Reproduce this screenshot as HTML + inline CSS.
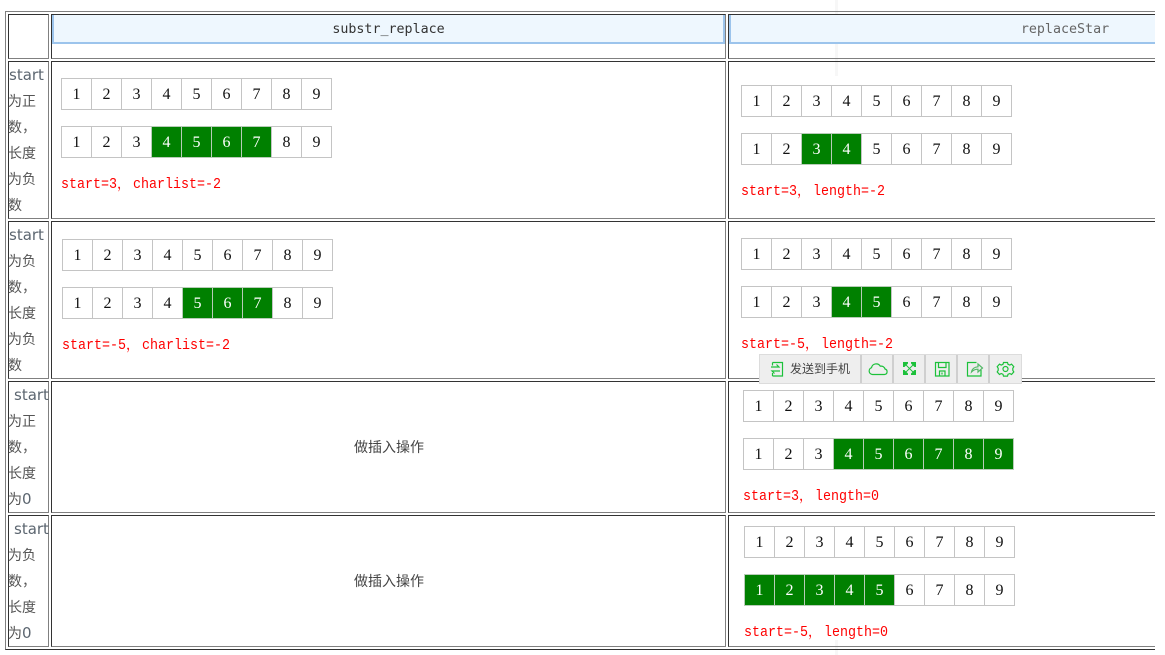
<!DOCTYPE html>
<html><head><meta charset="utf-8"><style>
html,body{margin:0;padding:0;background:#fff;width:1165px;height:655px;overflow:hidden}
body{position:relative}
.a{position:absolute;box-sizing:border-box}
.c{position:absolute;box-sizing:border-box;border:1px solid;border-color:#333 #808080 #808080 #333}
.n{position:absolute;display:flex;height:32px}
.n span{box-sizing:border-box;width:31px;height:32px;margin-right:-1px;border:1px solid #c4c4c4;text-align:center;font:16px/31px "Liberation Serif",serif;color:#111;background:#fff}
.n span.g{background:#008000;color:#fff;border-color:#b8ccb8}
.r{position:absolute;font:15px/20px "Liberation Mono","Noto Serif CJK SC",monospace;color:#f00;white-space:pre;transform:scaleX(.889);transform-origin:0 0}
.r i{display:inline-block;width:18px;font-style:normal}
.l{position:absolute;left:8px;width:41px;font:14px/26px "Liberation Sans","Noto Sans CJK SC",sans-serif;color:#555;white-space:nowrap}
.l b{font:15px/26px "DejaVu Sans",sans-serif;color:#5c6670;margin-left:1px}
.h{position:absolute;top:15px;height:29px;box-sizing:border-box;background:#eef7fe;border:2px solid #9cc4ec;border-top:0;text-align:center;font:13.33px/28px "DejaVu Sans Mono",monospace;color:#333;padding-top:1px}
.t{position:absolute;left:52.500px;width:673px;text-align:center;font:14px/20px "Liberation Sans","Noto Sans CJK SC",sans-serif;color:#444}
.s{position:absolute;top:355px;width:2px;height:28px;background:#cfcfcf}
</style></head><body>
<div class="a" style="left:835px;top:0;width:3px;height:76px;background:#f7f7f7"></div>
<div class="a" style="left:835px;top:640px;width:3px;height:15px;background:#f7f7f7"></div>
<div class="a" style="left:5px;top:11px;width:1160px;height:639px;border:1px solid;border-color:#808080 transparent #333 #808080;border-right:0"></div>
<div class="a" style="left:1155px;top:0;width:10px;height:655px;background:#fff;z-index:5"></div>

<div class="c" style="left:8px;top:14px;width:41px;height:45px"></div>
<div class="c" style="left:51px;top:14px;width:675px;height:45px"></div>
<div class="c" style="left:728px;top:14px;width:440px;height:45px"></div>
<div class="c" style="left:8px;top:61px;width:41px;height:158px"></div>
<div class="c" style="left:51px;top:61px;width:675px;height:158px"></div>
<div class="c" style="left:728px;top:61px;width:440px;height:158px"></div>
<div class="c" style="left:8px;top:221px;width:41px;height:158px"></div>
<div class="c" style="left:51px;top:221px;width:675px;height:158px"></div>
<div class="c" style="left:728px;top:221px;width:440px;height:158px"></div>
<div class="c" style="left:8px;top:381px;width:41px;height:132px"></div>
<div class="c" style="left:51px;top:381px;width:675px;height:132px"></div>
<div class="c" style="left:728px;top:381px;width:440px;height:132px"></div>
<div class="c" style="left:8px;top:515px;width:41px;height:132px"></div>
<div class="c" style="left:51px;top:515px;width:675px;height:132px"></div>
<div class="c" style="left:728px;top:515px;width:440px;height:132px"></div>

<div class="h" style="left:52px;width:673px">substr_replace</div>
<div class="h" style="left:729px;width:672px;color:#666">replaceStar</div>

<div class="l" style="top:62px"><b>start</b><br>为正<br>数，<br>长度<br>为负<br>数</div>
<div class="l" style="top:222px"><b>start</b><br>为负<br>数，<br>长度<br>为负<br>数</div>
<div class="l" style="top:382px"><b style="margin-left:6px">start</b><br>为正<br>数，<br>长度<br>为<b style="margin:0">0</b></div>
<div class="l" style="top:516px"><b style="margin-left:6px">start</b><br>为负<br>数，<br>长度<br>为<b style="margin:0">0</b></div>

<div class="n" style="left:61px;top:78px"><span>1</span><span>2</span><span>3</span><span>4</span><span>5</span><span>6</span><span>7</span><span>8</span><span>9</span></div>
<div class="n" style="left:61px;top:126px"><span>1</span><span>2</span><span>3</span><span class="g">4</span><span class="g">5</span><span class="g">6</span><span class="g">7</span><span>8</span><span>9</span></div>
<div class="r" style="left:61px;top:175px">start=3<i>，</i>charlist=-2</div>

<div class="n" style="left:741px;top:85px"><span>1</span><span>2</span><span>3</span><span>4</span><span>5</span><span>6</span><span>7</span><span>8</span><span>9</span></div>
<div class="n" style="left:741px;top:133px"><span>1</span><span>2</span><span class="g">3</span><span class="g">4</span><span>5</span><span>6</span><span>7</span><span>8</span><span>9</span></div>
<div class="r" style="left:741px;top:182px">start=3<i>，</i>length=-2</div>

<div class="n" style="left:62px;top:239px"><span>1</span><span>2</span><span>3</span><span>4</span><span>5</span><span>6</span><span>7</span><span>8</span><span>9</span></div>
<div class="n" style="left:62px;top:287px"><span>1</span><span>2</span><span>3</span><span>4</span><span class="g">5</span><span class="g">6</span><span class="g">7</span><span>8</span><span>9</span></div>
<div class="r" style="left:62px;top:336px">start=-5<i>，</i>charlist=-2</div>

<div class="n" style="left:741px;top:238px"><span>1</span><span>2</span><span>3</span><span>4</span><span>5</span><span>6</span><span>7</span><span>8</span><span>9</span></div>
<div class="n" style="left:741px;top:286px"><span>1</span><span>2</span><span>3</span><span class="g">4</span><span class="g">5</span><span>6</span><span>7</span><span>8</span><span>9</span></div>
<div class="r" style="left:741px;top:335px">start=-5<i>，</i>length=-2</div>

<div class="n" style="left:743px;top:390px"><span>1</span><span>2</span><span>3</span><span>4</span><span>5</span><span>6</span><span>7</span><span>8</span><span>9</span></div>
<div class="n" style="left:743px;top:438px"><span>1</span><span>2</span><span>3</span><span class="g">4</span><span class="g">5</span><span class="g">6</span><span class="g">7</span><span class="g">8</span><span class="g">9</span></div>
<div class="r" style="left:743px;top:487px">start=3<i>，</i>length=0</div>

<div class="n" style="left:744px;top:526px"><span>1</span><span>2</span><span>3</span><span>4</span><span>5</span><span>6</span><span>7</span><span>8</span><span>9</span></div>
<div class="n" style="left:744px;top:574px"><span class="g">1</span><span class="g">2</span><span class="g">3</span><span class="g">4</span><span class="g">5</span><span>6</span><span>7</span><span>8</span><span>9</span></div>
<div class="r" style="left:744px;top:623px">start=-5<i>，</i>length=0</div>

<div class="t" style="top:437px">做插入操作</div>
<div class="t" style="top:571px">做插入操作</div>

<div class="a" style="left:759px;top:354px;width:263px;height:30px;background:#eeeeee;border:1px solid #dcdcdc;z-index:6"></div>
<div style="position:absolute;left:0;top:0;z-index:7">
<div class="s" style="left:860px"></div><div class="s" style="left:892px"></div><div class="s" style="left:924px"></div><div class="s" style="left:956px"></div><div class="s" style="left:988px"></div>
<div style="position:absolute;left:790px;top:360px;font:12px/18px 'Noto Sans CJK SC',sans-serif;color:#444;white-space:nowrap">发送到手机</div>
<svg style="position:absolute;left:0;top:0" width="1165" height="655" fill="none" stroke="#1cc13a" stroke-width="1.2">
<path d="M772.500 362.500h10v13.500h-10M772.500 362.500v3M772.500 376v-3M771 367h8l-2.500-2.500M780 371h-8l2.500 2.500"/>
<path d="M874 374.500h-1.500a3.500 3.500 0 0 1-1-6.800 4.800 4.800 0 0 1 8.800-1.500 4 4 0 0 1 4.700 2.800 2.800 2.800 0 0 1-.5 5.500z"/>
<path stroke-width=".9" d="M904 363l11 11M915 363l-11 11"/>
<path fill="#1cc13a" stroke="none" d="M903 362h5v1.500l-1.500 1.500-2 2h-1.500zM916 362h-5v1.500l3.500 3.500h1.500zM903 375h5v-1.500l-3.500-3.500h-1.500zM916 375h-5v-1.500l3.500-3.500h1.500z"/>
<path d="M935.500 362.500h13.500v13.500h-13.500zM938.500 362.500v5h7.500v-5M939.500 376v-5h5.500v5M942 372.500v2"/>
<path d="M976.500 362.500h-9v13.500h13.500v-6"/>
<path stroke="#55b868" d="M971.500 372c.5-3 3-5 6.500-5.200v-2.800l4.500 4-4.500 4v-2.800c-2.500 0-4.800 1-6.500 2.800z"/>
<circle cx="1005.500" cy="369" r="2.500"/>
<path d="M1003.500 362.500h4l.5 1.800 1.800.8 1.700-1 2.300 2.600-1 1.600v2l1 1.600-2.300 2.600-1.700-1-1.800.8-.5 1.800h-4l-.5-1.800-1.800-.8-1.700 1-2.300-2.600 1-1.600v-2l-1-1.600 2.300-2.600 1.700 1 1.800-.8z"/>
</svg>
</div>
</body></html>
